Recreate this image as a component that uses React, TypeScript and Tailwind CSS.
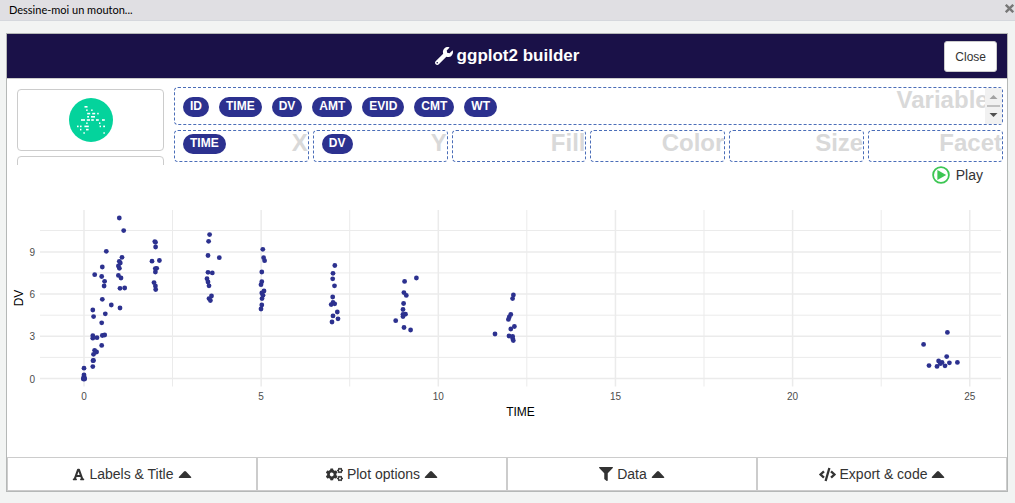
import React from "react";
import { FaWrench, FaFont, FaCogs, FaFilter, FaCode } from "react-icons/fa";

const variables = ["ID", "TIME", "DV", "AMT", "EVID", "CMT", "WT"];

const aesthetics: { label: string; value?: string }[] = [
  { label: "X", value: "TIME" },
  { label: "Y", value: "DV" },
  { label: "Fill" },
  { label: "Color" },
  { label: "Size" },
  { label: "Facet" },
];

const points: [number, number][] = [
  [119.3, 218], [123.7, 230.6], [106.3, 251.3], [122, 257.3], [119.3, 261.3], [120.3, 263],
  [94.7, 274.7], [102.3, 267], [101.7, 276.5], [104.6, 281.3], [104.1, 286], [118.4, 266],
  [119.4, 268.3], [118.4, 275.4], [121, 278], [120, 288.3], [124.7, 288], [102.3, 299.3],
  [111.3, 305], [120, 308], [92.8, 310], [93.6, 316.6], [105.3, 313.8], [101.7, 322.8],
  [92.8, 335.7], [92.8, 338.2], [97, 337.7], [102.3, 335.5], [104.7, 335], [101.7, 345.4],
  [94.6, 350.3], [96.6, 352], [93.5, 354.3], [93.5, 360.4], [93, 360.7], [92.8, 366.6],
  [84, 368.2], [84, 375], [84, 376.7], [83.4, 378.4], [84.6, 378.4], [83.4, 379], [84.6, 379],
  [154.8, 241.6], [155.5, 242.3], [155.6, 247], [152, 261.2], [159.4, 260.5], [155.3, 268.6],
  [156.7, 268.3], [155.4, 272], [154, 282.6], [155.4, 286], [155.7, 289.5],
  [209.6, 234.6], [208.6, 241.3], [208, 255.5], [219.3, 257.7], [208, 272.3], [212.3, 272.9],
  [207, 278.7], [208, 282], [209, 285.8], [211.5, 296], [209, 298.6], [210.4, 300.5],
  [262.8, 249.3], [263.6, 257.7], [264.6, 260.7], [261.8, 272], [261.8, 281.7], [261, 284.7],
  [264, 291], [261.8, 293], [263, 295.3], [262, 298.6], [261.8, 305], [261, 309],
  [334.8, 265.5], [333, 273.3], [332.7, 278.8], [334.5, 285.8], [332.7, 297], [333, 302.5],
  [331.2, 304.6], [334.7, 303.8], [337.3, 312], [333, 315.9], [338, 318.8], [332, 322],
  [416.4, 278], [404.6, 281.4], [403.9, 292.6], [406.3, 295.4], [403.6, 303.5], [403, 309.5],
  [405.5, 314.2], [403, 314.3], [403, 316.6], [395.7, 320.7], [404, 327.5], [410.6, 330],
  [513.4, 295], [512.6, 298.6], [510.8, 314.4], [509.3, 317], [508.4, 319.4], [514.4, 326.5],
  [510.8, 329], [495, 334], [509, 336], [512.6, 336.3], [512.7, 338.6], [513.3, 340.6],
  [947.4, 332.4], [923.6, 344.4], [946.7, 356.6], [929, 365.6], [938.6, 361], [942, 362.3],
  [937, 366.4], [940.3, 363.7], [945, 365.8], [949.4, 362.8], [957.4, 362.4],
];

const xTicks = [0, 5, 10, 15, 20, 25].map((v) => ({ v, at: 84 + v * 35.43 }));
const yTicks = [0, 3, 6, 9].map((v) => ({ v, at: 378.6 - v * 14.08 }));
const xMinor = [172.5, 349.7, 526.8, 704, 881.2];
const yMinor = [230.5, 272.9, 315.2, 357.4];

// Each dash of the logo: x, y, width.
const dashes: [number, number, number][] = [
  [15.5, 8, 3], [17.2, 11.4, 1.4], [22.2, 11.4, 1.4],
  [18.2, 14.8, 3], [23.2, 14.8, 3], [28.2, 14.8, 1.5],
  [18.2, 18, 1.8], [22, 18, 4],
  [12, 21.2, 4], [17.8, 21.2, 3.2], [22.2, 21.2, 2.6], [27, 21.2, 2.8], [33, 21.2, 2.8],
  [17.2, 24.4, 1.4], [30, 24.4, 1.4],
  [8, 27.6, 1.6], [11, 27.6, 1.6], [15.4, 27.6, 4.4], [30.6, 27.6, 1.4], [34.2, 27.6, 1.8],
  [11, 30.8, 1.4], [17, 30.8, 2.6],
  [14.4, 34.2, 1.4], [34.4, 34.2, 1.4],
];

function Badge({ children }: { children: React.ReactNode }) {
  return (
    <span className="h-5 rounded-full bg-[#2c318f] px-[7px] text-xs leading-[18px] font-bold text-white">
      {children}
    </span>
  );
}

function DropZone({ label, className, children }: { label: string; className: string; children?: React.ReactNode }) {
  return (
    <div className={`relative flex overflow-hidden rounded border border-dashed border-[#4a6db8] pl-2 ${className}`}>
      <span className="absolute top-0 right-0 text-2xl leading-6 font-bold text-[#d9d9d9]">{label}</span>
      <div className="relative flex gap-2.5">{children}</div>
    </div>
  );
}

function ScrollBar() {
  return (
    <svg className="absolute top-0 right-0" width="17" height="36" viewBox="0 0 17 36" aria-hidden="true">
      <rect width="17" height="36" fill="#f1f1f1" />
      <path d="M8.5 7 L12.5 11 H4.5z" fill="#a3a3a3" />
      <rect x="2" y="17" width="13" height="2" fill="#c1c1c1" />
      <path d="M8.5 29 L12.5 25 H4.5z" fill="#505050" />
    </svg>
  );
}

function Chart() {
  return (
    <svg className="block h-auto w-full" viewBox="7 185 1000 272" role="img" aria-label="DV by TIME" fontFamily="Liberation Sans, Arial, sans-serif">
      <g stroke="#ebebeb" strokeWidth="1">
        {xMinor.map((x) => <line key={x} x1={x} x2={x} y1="210" y2="386.5" />)}
        {yMinor.map((y) => <line key={y} x1="40" x2="1001" y1={y} y2={y} />)}
      </g>
      <g stroke="#ebebeb" strokeWidth="1.5">
        {xTicks.map((t) => <line key={t.v} x1={t.at} x2={t.at} y1="210" y2="386.5" />)}
        {yTicks.map((t) => <line key={t.v} x1="40" x2="1001" y1={t.at} y2={t.at} />)}
      </g>
      <g fill="#2c318f">
        {points.map(([x, y], i) => <circle key={i} cx={x} cy={y} r="2.4" />)}
      </g>
      <g fill="#4d4d4d" fontSize="10">
        {xTicks.map((t) => <text key={t.v} x={t.at} y="400" textAnchor="middle">{t.v}</text>)}
        {yTicks.map((t) => <text key={t.v} x="35" y={t.at + 4} textAnchor="end">{t.v}</text>)}
      </g>
      <g fill="#000" fontSize="12">
        <text x="520.5" y="416" textAnchor="middle">TIME</text>
        <text transform="translate(23 298) rotate(-90)" textAnchor="middle">DV</text>
      </g>
    </svg>
  );
}

const menus = [
  { label: "Labels & Title", icon: <FaFont size={13} /> },
  { label: "Plot options", icon: <FaCogs size={17} /> },
  { label: "Data", icon: <FaFilter size={14} /> },
  { label: "Export & code", icon: <FaCode size={17} /> },
];

export default function App() {
  return (
    <div className="min-h-screen bg-[#f2f4f3] font-['Liberation_Sans',Arial,sans-serif] text-sm text-[#333]">
      <div className="flex h-[21px] items-center justify-between border-b border-[#d5d8dd] bg-[#e0dfe3] pl-[9px]">
        <span className="font-[Lato,sans-serif] text-[11px] leading-4 text-black">Dessine-moi un mouton...</span>
        <button type="button" aria-label="Close window" className="pr-px pb-1">
          <svg width="9" height="9" viewBox="0 0 9 9" stroke="#777" strokeWidth="2.4">
            <path d="M.8 .8 L8.2 8.2 M8.2 .8 L.8 8.2" />
          </svg>
        </button>
      </div>

      <div className="mt-3 mr-[7px] ml-1.5 border border-[#b5b8b7] bg-white">
        <header className="relative flex h-[45px] items-center justify-center border-b border-[#ccc] bg-[#1a1148] text-white">
          <h1 className="flex items-center gap-1 text-[17px] leading-6 font-bold">
            <FaWrench size={18} />
            ggplot2 builder
          </h1>
          <button type="button" className="absolute top-[7px] right-[10px] h-[31px] rounded-[3px] border border-[#ccc] bg-white px-[10px] text-xs text-[#333]">
            Close
          </button>
        </header>

        <div className="flex h-[86px] gap-[10px] overflow-hidden pr-1 pl-[10px]">
          <div className="flex w-[147px] shrink-0 flex-col gap-[5px] pt-[10px]">
            <button type="button" aria-label="Choose geom" className="flex h-[62px] shrink-0 items-center justify-center rounded border border-[#ccc] bg-white">
              <svg width="44" height="44" viewBox="0 0 44 44">
                <circle cx="22" cy="22" r="22" fill="#04d39c" />
                {dashes.map(([x, y, w]) => (
                  <rect key={`${x}-${y}`} x={x} y={y} width={w} height="1.6" fill="#fff" />
                ))}
              </svg>
            </button>
            <div className="h-[62px] shrink-0 rounded border border-[#ccc]" />
          </div>
          <div className="flex min-w-0 flex-1 flex-col gap-[5px] pt-2">
            <div className="relative">
              <DropZone label="Variables" className="h-[38px] pt-[9px]">
                {variables.map((v) => <Badge key={v}>{v}</Badge>)}
              </DropZone>
              <div className="absolute top-px right-px">
                <ScrollBar />
              </div>
            </div>
            <div className="grid grid-cols-6 gap-1">
              {aesthetics.map((a) => (
                <DropZone key={a.label} label={a.label} className="h-8 pt-[3px]">
                  {a.value && <Badge>{a.value}</Badge>}
                </DropZone>
              ))}
            </div>
          </div>
        </div>

        <div className="flex h-5 justify-end pr-6">
          <button type="button" className="flex items-center gap-1.5 leading-5">
            <svg width="18" height="18" viewBox="0 0 18 18">
              <circle cx="9" cy="9" r="7.9" fill="none" stroke="#3cc653" strokeWidth="1.8" />
              <path d="M5.4 4 L14.2 9 L5.4 14z" fill="#3cc653" />
            </svg>
            Play
          </button>
        </div>

        <Chart />

        <div className="grid grid-cols-4">
          {menus.map((m) => (
            <button key={m.label} type="button" className="flex h-[34px] items-center justify-center gap-1 border border-[#ccc] bg-white leading-5">
              {m.icon}
              {m.label}
              <svg width="14" height="7" viewBox="0 0 14 7" fill="#333">
                <path d="M7 0 Q7.5 0 8 .5 L13.2 6 Q13.6 7 12.6 7 H1.4 Q.4 7 .8 6 L6 .5 Q6.5 0 7 0z" />
              </svg>
            </button>
          ))}
        </div>
      </div>
    </div>
  );
}
